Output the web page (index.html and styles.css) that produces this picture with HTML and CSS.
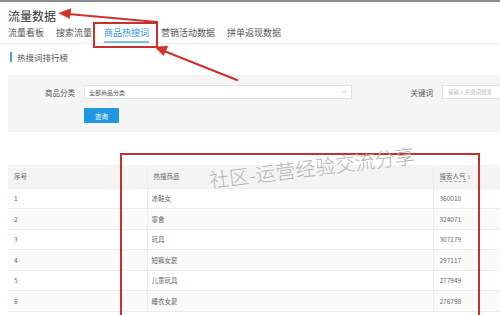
FILE: index.html
```html
<!DOCTYPE html>
<html lang="zh-CN">
<head>
    <meta charset="UTF-8">
    <title>流量数据 - 商品热搜词</title>
    <link rel="stylesheet" href="styles.css">
</head>
<body>
    <div class="page">
        <div class="header">
            <h1 class="page-title">流量数据</h1>
            <div class="tabs">
                <span class="tab">流量看板</span>
                <span class="tab">搜索流量</span>
                <span class="tab active">商品热搜词</span>
                <span class="tab">营销活动数据</span>
                <span class="tab">拼单返现数据</span>
            </div>
        </div>

        <div class="section-title">热搜词排行榜</div>

        <div class="filter">
            <div class="filter-row">
                <label class="filter-label">商品分类</label>
                <div class="select">
                    <span>全部商品分类</span>
                    <svg class="chevron" width="6" height="4" viewBox="0 0 6 4"><path d="M0.5 0.5 L3 3 L5.5 0.5" fill="none" stroke="#bbb" stroke-width="0.8"/></svg>
                </div>
                <label class="filter-label keyword">关键词</label>
                <div class="input">请输入关键词搜索</div>
            </div>
            <div class="filter-row">
                <button class="btn-query">查询</button>
            </div>
        </div>

        <table class="rank-table">
            <thead>
                <tr>
                    <th class="col-no">序号</th>
                    <th class="col-name">热搜商品</th>
                    <th class="col-hot"><span class="sortable">搜索人气</span> <span class="sort">⇕</span></th>
                </tr>
            </thead>
            <tbody>
                <tr><td>1</td><td>凉鞋女</td><td>360010</td></tr>
                <tr><td>2</td><td>零食</td><td>324071</td></tr>
                <tr><td>3</td><td>玩具</td><td>307179</td></tr>
                <tr><td>4</td><td>短裤女夏</td><td>297117</td></tr>
                <tr><td>5</td><td>儿童玩具</td><td>277949</td></tr>
                <tr><td>6</td><td>睡衣女夏</td><td>276798</td></tr>
            </tbody>
        </table>
    </div>

    <!-- annotations drawn on top of the screenshot -->
    <div class="mark mark-tab"></div>
    <div class="mark mark-table"></div>
    <svg class="arrows" width="500" height="315" viewBox="0 0 500 315">
        <g fill="#d0312d" stroke="#d0312d" stroke-linecap="round">
            <line x1="157" y1="22" x2="68" y2="14" stroke-width="2.2"/>
            <polygon points="59,13 71,8.5 69.5,18.5" stroke-width="0.5"/>
            <line x1="237" y1="80" x2="164" y2="51" stroke-width="2.2"/>
            <polygon points="155,47 168,46 163.5,55.5" stroke-width="0.5"/>
        </g>
    </svg>
    <div class="watermark">社区-运营经验交流分享</div>
</body>
</html>
```

FILE: styles.css
```css
* {
    margin: 0;
    padding: 0;
    box-sizing: border-box;
}

body {
    font-family: "Noto Sans CJK SC", "Noto Sans", sans-serif;
    background: #fff;
    color: #555;
    width: 500px;
    height: 315px;
    overflow: hidden;
    position: relative;
}

.page {
    border-top: 2px solid #8c8c8c;
}

.header {
    padding: 6px 0 0 8px;
    border-bottom: 1px solid #ececec;
}

.page-title {
    font-size: 12px;
    line-height: 16px;
    font-weight: 400;
    color: #333;
}

.tabs {
    display: flex;
    gap: 12px;
}

.tab {
    font-size: 9px;
    line-height: 12px;
    padding: 3px 0 2px;
    border-bottom: 2px solid transparent;
    color: #555;
}

.tab.active {
    color: #2b95e0;
    border-bottom-color: #7fbde9;
}

.section-title {
    margin: 8px 0 0 10px;
    padding-left: 5px;
    border-left: 2px solid #4aa0e0;
    font-size: 8.5px;
    line-height: 10px;
    color: #555;
}

.filter {
    margin: 13px 0 0 8px;
    background: #f5f5f5;
    padding: 10px 0 9px;
    overflow: hidden;
}

.filter-row {
    display: flex;
    align-items: center;
}

.filter-row + .filter-row {
    margin-top: 9px;
    padding-left: 76px;
}

.filter-label {
    flex-shrink: 0;
    width: 67px;
    margin-right: 9px;
    text-align: right;
    font-size: 7.5px;
    color: #555;
    white-space: nowrap;
}

.filter-label.keyword {
    width: 24px;
    margin-left: 57px;
    margin-right: 9px;
}

.select {
    flex-shrink: 0;
    width: 268px;
    height: 14px;
    background: #fff;
    border: 1px solid #e3e3e3;
    display: flex;
    align-items: center;
    justify-content: space-between;
    padding: 0 4px 0 4px;
    font-size: 6px;
    color: #555;
}

.chevron {
    display: block;
}

.input {
    flex-shrink: 0;
    width: 70px;
    height: 14px;
    background: #fff;
    border: 1px solid #e3e3e3;
    padding-left: 5px;
    font-size: 5.5px;
    line-height: 12px;
    color: #bbb;
    white-space: nowrap;
    overflow: hidden;
}

.btn-query {
    width: 35px;
    height: 15px;
    border: none;
    border-radius: 1px;
    background: #2196e3;
    color: #fff;
    font-family: inherit;
    font-size: 6.5px;
}

.rank-table {
    margin: 33px 0 0 8px;
    width: 520px;
    border-collapse: collapse;
    font-size: 6.5px;
    color: #666;
}

.rank-table th {
    height: 23px;
    background: #f4f4f4;
    font-weight: 400;
    text-align: left;
    color: #666;
}

.rank-table td {
    height: 20.5px;
    border-top: 1px solid #ececec;
    border-bottom: 1px solid #ececec;
}

.rank-table th,
.rank-table td {
    padding-left: 6px;
    border-right: 1px solid #ececec;
}

.rank-table tbody tr:nth-child(even) td {
    background: #fafafa;
}

.col-no {
    width: 139px;
}

.col-name {
    width: 286px;
    padding-left: 4px;
}

.rank-table td:nth-child(2) {
    padding-left: 4px;
}

.sortable {
    border-bottom: 1px dashed #aaa;
}

.sort {
    font-size: 5px;
    color: #999;
}

.mark {
    position: absolute;
    border: 2px solid #c8302e;
}

.mark-tab {
    left: 93px;
    top: 22px;
    width: 65px;
    height: 26px;
}

.mark-table {
    left: 120px;
    top: 153px;
    width: 360px;
    height: 180px;
}

.arrows {
    position: absolute;
    left: 0;
    top: 0;
}

.watermark {
    position: absolute;
    left: 211px;
    top: 165px;
    font-size: 20px;
    font-weight: 300;
    color: #b4b4b4;
    white-space: nowrap;
    transform: rotate(-7deg);
    transform-origin: left bottom;
}
```
